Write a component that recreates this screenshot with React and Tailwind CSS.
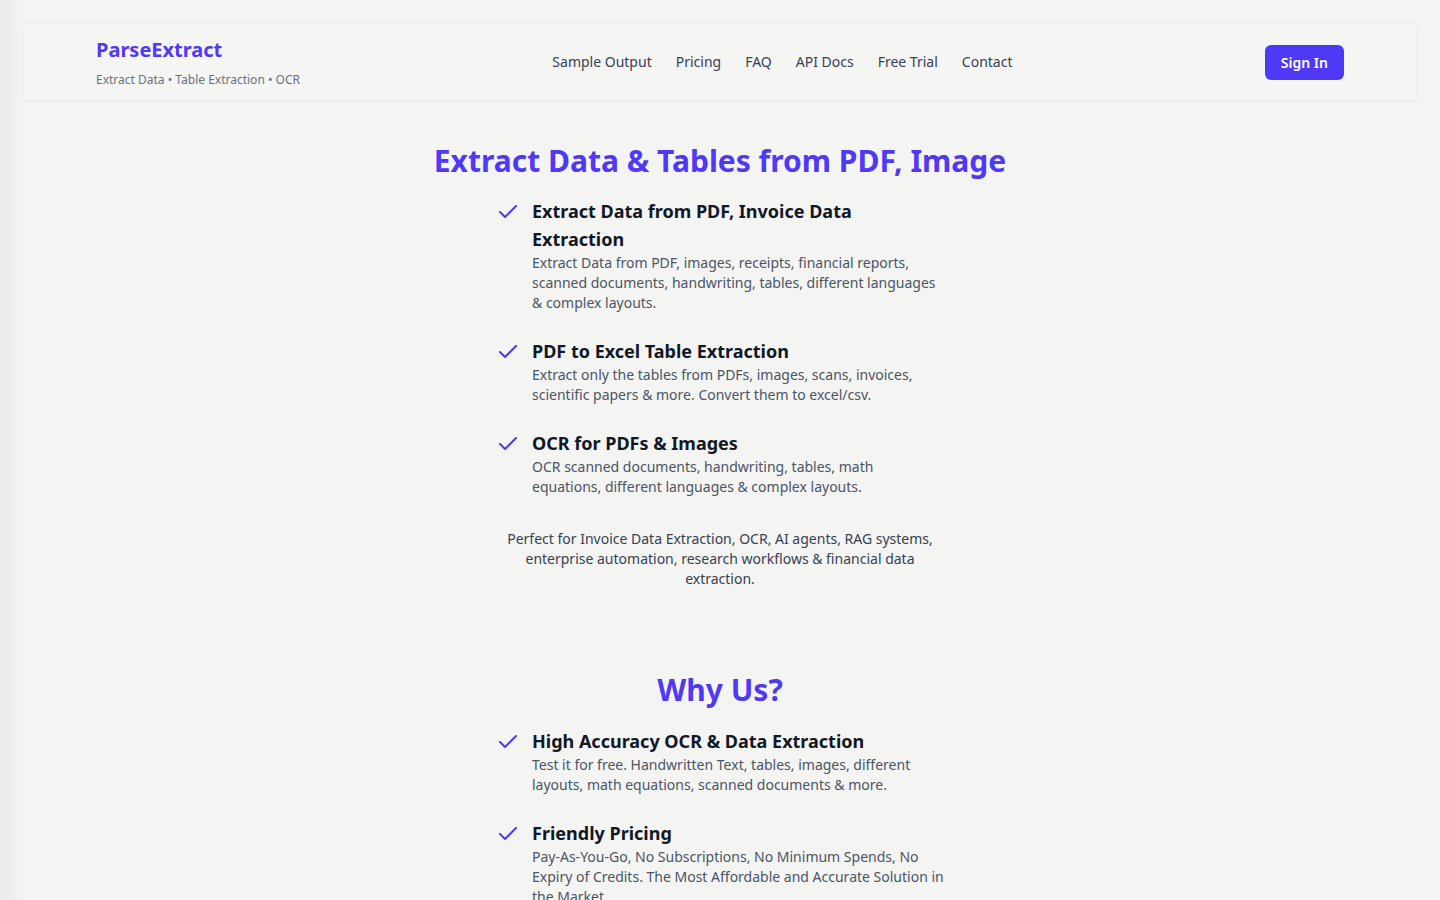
import React from 'react';
import { Check } from 'lucide-react';

const NAV_LINKS = ['Sample Output', 'Pricing', 'FAQ', 'API Docs', 'Free Trial', 'Contact'];

const FEATURES = [
  {
    title: 'Extract Data from PDF, Invoice Data Extraction',
    text: 'Extract Data from PDF, images, receipts, financial reports, scanned documents, handwriting, tables, different languages & complex layouts.',
  },
  {
    title: 'PDF to Excel Table Extraction',
    text: 'Extract only the tables from PDFs, images, scans, invoices, scientific papers & more. Convert them to excel/csv.',
  },
  {
    title: 'OCR for PDFs & Images',
    text: 'OCR scanned documents, handwriting, tables, math equations, different languages & complex layouts.',
  },
];

const WHY_US = [
  {
    title: 'High Accuracy OCR & Data Extraction',
    text: 'Test it for free. Handwritten Text, tables, images, different layouts, math equations, scanned documents & more.',
  },
  {
    title: 'Friendly Pricing',
    text: 'Pay-As-You-Go, No Subscriptions, No Minimum Spends, No Expiry of Credits. The Most Affordable and Accurate Solution in the Market.',
  },
  {
    title: 'Developer Friendly API',
    text: 'Simple REST API with clear docs. Get structured JSON output in seconds.',
  },
];

function FeatureList({ items }) {
  return (
    <ul className="max-w-md mx-auto space-y-6">
      {items.map((item) => (
        <li key={item.title} className="flex gap-3">
          <Check className="w-6 h-6 mt-[3px] shrink-0 text-indigo-600" strokeWidth={2} />
          <div>
            <h3 className="text-lg leading-7 font-bold text-gray-900">{item.title}</h3>
            <p className="text-sm leading-5 text-gray-600">{item.text}</p>
          </div>
        </li>
      ))}
    </ul>
  );
}

function Header() {
  return (
    <header className="mx-6 h-[76px] px-18 flex items-center justify-between bg-[#f5f5f3] rounded-sm shadow-[0_1px_3px_rgba(0,0,0,0.08)]">
      <div>
        <a href="#" className="block text-xl leading-7 font-bold text-indigo-600">ParseExtract</a>
        <p className="mt-2 text-xs leading-4 text-gray-500">Extract Data • Table Extraction • OCR</p>
      </div>
      <nav className="flex items-center gap-6">
        {NAV_LINKS.map((link) => (
          <a key={link} href="#" className="text-sm text-gray-700 hover:text-indigo-600">
            {link}
          </a>
        ))}
      </nav>
      <button className="mt-px px-4 py-2 h-[35px] leading-[19px] rounded-md bg-indigo-600 text-sm font-semibold text-white hover:bg-indigo-500">
        Sign In
      </button>
    </header>
  );
}

export default function App() {
  return (
    <div
      className="min-h-screen pt-6 pb-16 bg-[linear-gradient(to_right,#ebebe9_0px,#f4f4f2_24px)]"
      style={{ fontFamily: '"Noto Sans", "Open Sans", sans-serif' }}
    >
      <Header />

      <main className="px-6">
        {/* Hero */}
        <section className="pt-[43px]">
          <h1 className="text-3xl font-bold text-indigo-600 text-center mb-[18px]">
            Extract Data &amp; Tables from PDF, Image
          </h1>
          <FeatureList items={FEATURES} />
          <p className="mt-8 max-w-md mx-auto text-center text-sm leading-5 text-gray-700">
            Perfect for Invoice Data Extraction, OCR, AI agents, RAG systems, enterprise automation, research workflows &amp; financial data extraction.
          </p>
        </section>

        {/* Why Us */}
        <section className="pt-[83px]">
          <h2 className="text-3xl font-bold text-indigo-600 text-center mb-[19px]">Why Us?</h2>
          <FeatureList items={WHY_US} />
        </section>
      </main>
    </div>
  );
}
